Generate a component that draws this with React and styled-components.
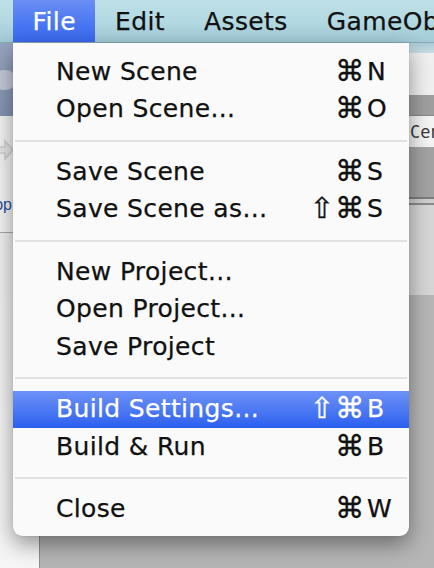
import React from "react";
import styled, { createGlobalStyle } from "styled-components";

const Global = createGlobalStyle`
  html, body { margin: 0; padding: 0; background: #b8b8b8; }
  body { font-family: "DejaVu Sans", "Liberation Sans", sans-serif; }
`;

const Screen = styled.div`
  position: relative;
  width: 434px;
  height: 568px;
  overflow: hidden;
  display: flex;
  flex-direction: column;
  background: #b8b8b8;
`;

const MenuBar = styled.div`
  height: 43px;
  flex: none;
  display: flex;
  padding-left: 13px;
  box-sizing: border-box;
  overflow: hidden;
  background: linear-gradient(#bfe0e8 0%, #b3d9e2 50%, #a2cbd6 100%);
  border-bottom: 1px solid #87aab5;
`;

const BarItem = styled.div`
  padding: 2px 19.5px 0;
  height: 42px;
  line-height: 40px;
  font-size: 25px;
  letter-spacing: 0.4px;
  -webkit-text-stroke: 0.25px currentColor;
  color: ${(p) => (p.$open ? "#ffffff" : "#111111")};
  background: ${(p) =>
    p.$open ? "linear-gradient(#6a8ef5 0%, #4674f1 60%, #3a68ef 100%)" : "transparent"};
  white-space: nowrap;
`;

const Backdrop = styled.div`
  flex: 1;
  display: flex;
  min-height: 0;
`;

const SidePane = styled.div`
  width: 39px;
  flex: none;
  display: flex;
  flex-direction: column;
  border-right: 1px solid #8e8e8e;
  background: linear-gradient(#ececec, #f6f6f6);
`;

const SideToolbar = styled.div`
  height: 73px;
  flex: none;
  background: linear-gradient(#97a6bf, #8494b0);
  display: flex;
  align-items: center;
`;

const ToolBlob = styled.div`
  width: 22px;
  height: 20px;
  margin-left: -6px;
  border-radius: 10px;
  background: #c3cad8;
`;

const SideList = styled.div`
  height: 117px;
  flex: none;
  background: #f3f3f3;
  border-bottom: 1px solid #a9a9a9;
  display: flex;
  flex-direction: column;
  padding-top: 22px;
  box-sizing: border-box;
  overflow: hidden;
`;

const ArrowWrap = styled.div`
  height: 24px;
  display: flex;
`;

const SideLabel = styled.div`
  margin-top: 34px;
  width: 12px;
  direction: rtl;
  overflow: hidden;
  white-space: nowrap;
  font-family: "Liberation Sans", sans-serif;
  font-size: 16px;
  color: #2c4f98;
`;

const MainPane = styled.div`
  flex: 1;
  display: flex;
  flex-direction: column;
  background: #b6b6b6;
`;

const Band = styled.div`
  height: ${(p) => p.$h}px;
  flex: none;
  background: ${(p) => p.$bg};
`;

const FieldRow = styled.div`
  height: 32px;
  flex: none;
  background: #f4f4f4;
  border-top: 1px solid #8a8a8a;
  box-sizing: border-box;
  display: flex;
  justify-content: flex-end;
  align-items: center;
  font-family: "DejaVu Sans Mono", monospace;
  font-size: 17px;
  color: #3a3a3a;
`;

const FieldText = styled.span`
  width: 24px;
  overflow: hidden;
  white-space: nowrap;
`;

const DoubleRule = styled.div`
  height: 8px;
  flex: none;
  border-top: 2px solid #7d7d7d;
  border-bottom: 2px solid #8a8a8a;
  background: #cfcfcf;
  box-sizing: border-box;
`;

const Menu = styled.div`
  position: absolute;
  top: 43px;
  left: 13px;
  width: 396px;
  box-sizing: border-box;
  padding: 10px 0 8px;
  background: #fafafa;
  border-radius: 0 0 9px 9px;
  box-shadow: 0 8px 22px rgba(0, 0, 0, 0.42), 0 0 1px rgba(0, 0, 0, 0.3);
`;

const Item = styled.div`
  height: 37.5px;
  display: flex;
  align-items: center;
  padding: 0 0 1px 43px;
  box-sizing: border-box;
  font-size: 25px;
  letter-spacing: 0.35px;
  -webkit-text-stroke: 0.25px currentColor;
  color: ${(p) => (p.$active ? "#ffffff" : "#111111")};
  background: ${(p) =>
    p.$active ? "linear-gradient(#6d91f6 0%, #4a77f2 55%, #2a5fee 100%)" : "transparent"};
  white-space: nowrap;
`;

const Label = styled.span`
  flex: 1;
`;

const Mods = styled.span`
  width: 64px;
  text-align: right;
  font-size: 29px;
  line-height: 1;
  letter-spacing: 1px;
  -webkit-text-stroke: 0.35px currentColor;
`;

const Key = styled.span`
  width: 42px;
  padding-left: 2px;
`;

const Separator = styled.div`
  height: 25px;
  display: flex;
  align-items: center;
  padding: 0 2px;
  &::after {
    content: "";
    flex: 1;
    height: 2px;
    background: #e1e1e1;
  }
`;

const groups = [
  [
    { label: "New Scene", mods: "⌘", key: "N" },
    { label: "Open Scene...", mods: "⌘", key: "O" },
  ],
  [
    { label: "Save Scene", mods: "⌘", key: "S" },
    { label: "Save Scene as…", mods: "⇧⌘", key: "S" },
  ],
  [{ label: "New Project…" }, { label: "Open Project..." }, { label: "Save Project" }],
  [
    { label: "Build Settings...", mods: "⇧⌘", key: "B", active: true },
    { label: "Build & Run", mods: "⌘", key: "B" },
  ],
  [{ label: "Close", mods: "⌘", key: "W" }],
];

export default function App() {
  return (
    <>
      <Global />
      <Screen>
        <MenuBar>
          <BarItem $open>File</BarItem>
          <BarItem>Edit</BarItem>
          <BarItem>Assets</BarItem>
          <BarItem>GameObject</BarItem>
        </MenuBar>
        <Backdrop>
          <SidePane>
            <SideToolbar>
              <ToolBlob />
            </SideToolbar>
            <SideList>
              <ArrowWrap>
                <svg width="14" height="24" viewBox="0 0 14 24">
                  <path d="M-6 9 H5 V3 L13 12 L5 21 V15 H-6 Z" fill="#e6e6e6" stroke="#cfcfcf" strokeWidth="1.5" />
                </svg>
              </ArrowWrap>
              <SideLabel>Desktop</SideLabel>
            </SideList>
          </SidePane>
          <MainPane>
            <Band $h={10} $bg="linear-gradient(#aacbd6, #c7dde5)" />
            <Band $h={42} $bg="#f0f0f0" />
            <Band $h={20} $bg="#9f9f9f" />
            <FieldRow>
              <FieldText>Center</FieldText>
            </FieldRow>
            <Band $h={50} $bg="#a3a3a3" />
            <DoubleRule />
            <Band $h={90} $bg="#d6d6d6" />
          </MainPane>
        </Backdrop>
        <Menu>
          {groups.map((g, gi) => (
            <React.Fragment key={gi}>
              {gi > 0 && <Separator />}
              {g.map((it) => (
                <Item key={it.label} $active={it.active}>
                  <Label>{it.label}</Label>
                  {it.key && (
                    <>
                      <Mods>{it.mods}</Mods>
                      <Key>{it.key}</Key>
                    </>
                  )}
                </Item>
              ))}
            </React.Fragment>
          ))}
        </Menu>
      </Screen>
    </>
  );
}
